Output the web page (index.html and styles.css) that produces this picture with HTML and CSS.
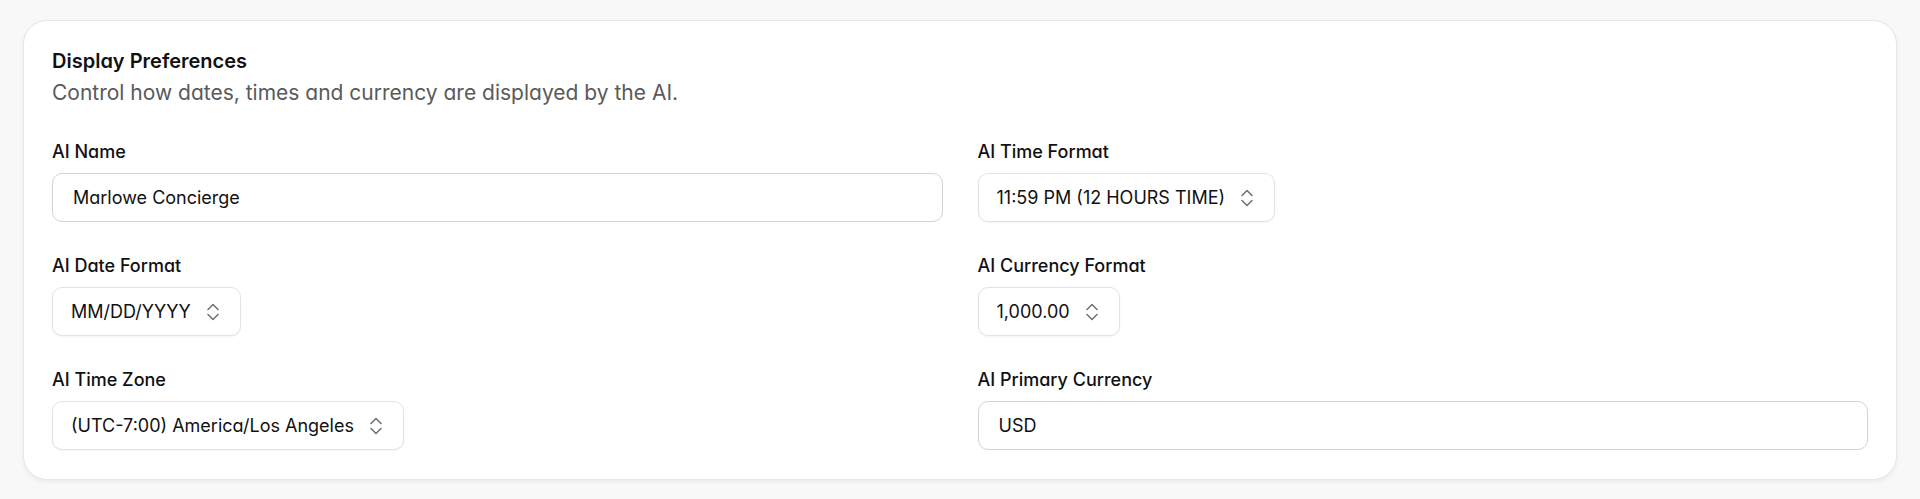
FILE: index.html
```html
<!DOCTYPE html>
<html lang="en">

<head>
    <meta charset="UTF-8">
    <meta name="viewport" content="width=device-width, initial-scale=1.0">
    <title>Display Preferences</title>
    <link rel="stylesheet" href="styles.css">
</head>

<body>
    <div class="card">
        <h2>Display Preferences</h2>
        <p class="subtitle">Control how dates, times and currency are displayed by the AI.</p>

        <form class="prefs-grid">
            <div class="field">
                <label for="ai_name">AI Name</label>
                <input type="text" id="ai_name" value="Marlowe Concierge">
            </div>
            <div class="field">
                <label>AI Time Format</label>
                <button type="button" class="select-trigger">
                    <span>11:59 PM (12 HOURS TIME)</span>
                    <svg class="chevrons" viewBox="0 0 12 18"><path d="M1 6.5 6 1.5l5 5M1 11.5l5 5 5-5"/></svg>
                </button>
            </div>
            <div class="field">
                <label>AI Date Format</label>
                <button type="button" class="select-trigger">
                    <span>MM/DD/YYYY</span>
                    <svg class="chevrons" viewBox="0 0 12 18"><path d="M1 6.5 6 1.5l5 5M1 11.5l5 5 5-5"/></svg>
                </button>
            </div>
            <div class="field">
                <label>AI Currency Format</label>
                <button type="button" class="select-trigger">
                    <span>1,000.00</span>
                    <svg class="chevrons" viewBox="0 0 12 18"><path d="M1 6.5 6 1.5l5 5M1 11.5l5 5 5-5"/></svg>
                </button>
            </div>
            <div class="field">
                <label>AI Time Zone</label>
                <button type="button" class="select-trigger">
                    <span>(UTC-7:00) America/Los Angeles</span>
                    <svg class="chevrons" viewBox="0 0 12 18"><path d="M1 6.5 6 1.5l5 5M1 11.5l5 5 5-5"/></svg>
                </button>
            </div>
            <div class="field">
                <label for="primary_currency">AI Primary Currency</label>
                <input type="text" id="primary_currency" value="USD">
            </div>
        </form>
    </div>
</body>

</html>
```

FILE: styles.css
```css
body {
    font-family: 'Inter', 'Noto Sans', sans-serif;
    font-feature-settings: "cv11";
    background-color: #f8f8f8;
    color: #111;
    margin: 0;
    padding: 20px 23px;
}

.card {
    background: #fff;
    border: 1px solid #e6e6e6;
    border-radius: 24px;
    padding: 26px 28px 29px;
    box-shadow: 0 2px 4px rgba(0, 0, 0, 0.06);
}

.card h2 {
    font-size: 20px;
    font-weight: 600;
    line-height: 28px;
    margin: 0 0 4px;
}

.subtitle {
    font-size: 21px;
    line-height: 28px;
    color: #5a5a5a;
    margin: 0;
}

.prefs-grid {
    display: grid;
    grid-template-columns: 1fr 1fr;
    column-gap: 35px;
    row-gap: 30px;
    margin-top: 31px;
}

.field {
    display: flex;
    flex-direction: column;
    align-items: flex-start;
}

.field label {
    font-size: 18px;
    font-weight: 500;
    line-height: 28px;
    margin-bottom: 7px;
}

input[type="text"] {
    box-sizing: border-box;
    width: 100%;
    height: 49px;
    padding: 0 20px;
    font-family: inherit;
    font-feature-settings: inherit;
    font-size: 18px;
    color: #111;
    border: 1px solid #d4d4d4;
    border-radius: 10px;
    outline: none;
}

.select-trigger {
    display: inline-flex;
    align-items: center;
    gap: 16px;
    height: 49px;
    padding: 0 21px 0 18px;
    font-family: inherit;
    font-feature-settings: inherit;
    font-size: 18px;
    color: #111;
    background: #fff;
    border: 1px solid #e3e3e3;
    border-radius: 10px;
    box-shadow: 0 1px 2px rgba(0, 0, 0, 0.05);
    cursor: pointer;
}

.chevrons {
    width: 12px;
    height: 18px;
    fill: none;
    stroke: #6f6f6f;
    stroke-width: 1.5;
    stroke-linecap: round;
    stroke-linejoin: round;
}
```
